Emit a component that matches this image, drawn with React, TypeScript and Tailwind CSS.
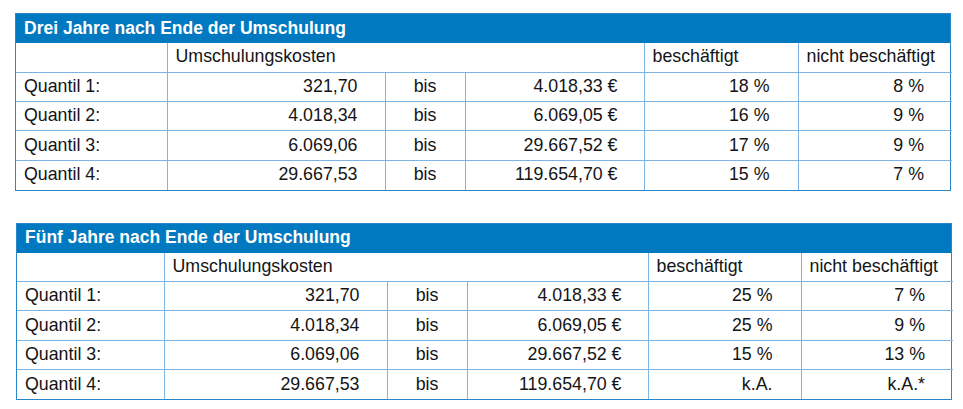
const tables = [
  {
    title: "Drei Jahre nach Ende der Umschulung",
    cols: [151, 218, 80, 179, 154, 154],
    rows: [
      ["Quantil 1:", "321,70", "4.018,33 €", "18 %", "8 %"],
      ["Quantil 2:", "4.018,34", "6.069,05 €", "16 %", "9 %"],
      ["Quantil 3:", "6.069,06", "29.667,52 €", "17 %", "9 %"],
      ["Quantil 4:", "29.667,53", "119.654,70 €", "15 %", "7 %"],
    ],
    className: "ml-[15px]",
  },
  {
    title: "Fünf Jahre nach Ende der Umschulung",
    cols: [147, 223, 80, 181, 153, 152],
    rows: [
      ["Quantil 1:", "321,70", "4.018,33 €", "25 %", "7 %"],
      ["Quantil 2:", "4.018,34", "6.069,05 €", "25 %", "9 %"],
      ["Quantil 3:", "6.069,06", "29.667,52 €", "15 %", "13 %"],
      ["Quantil 4:", "29.667,53", "119.654,70 €", "k.A.", "k.A.*"],
    ],
    className: "ml-[16px] mt-[32px]",
  },
];

const cell = "h-[29.4px] border-l border-t border-[#7db4e3] first:border-l-0 p-0 align-middle";

function CostTable({ title, cols, rows, className }: (typeof tables)[number]) {
  return (
    <div className={`w-[936px] border-[1.5px] border-[#2a85c9] ${className}`}>
      <div className="flex h-[29px] items-center bg-[#0079c1] pl-[8px] text-[17.5px] font-bold text-white">
        {title}
      </div>
      <table className="w-full table-fixed border-collapse">
        <colgroup>
          {cols.map((w, i) => (
            <col key={i} style={{ width: w }} />
          ))}
        </colgroup>
        <tbody>
          <tr>
            <td className="h-[29px] p-0" />
            <td colSpan={3} className="h-[29px] border-l border-[#7db4e3] pl-[8px]">
              Umschulungskosten
            </td>
            <td className="h-[29px] border-l border-[#7db4e3] pl-[8px]">beschäftigt</td>
            <td className="h-[29px] border-l border-[#7db4e3] pl-[8px]">nicht beschäftigt</td>
          </tr>
          {rows.map(([label, from, to, emp, notEmp]) => (
            <tr key={label}>
              <td className={`${cell} pl-[8px]`}>{label}</td>
              <td className={`${cell} pr-[27px] text-right`}>{from}</td>
              <td className={`${cell} text-center`}>bis</td>
              <td className={`${cell} pr-[26px] text-right`}>{to}</td>
              <td className={`${cell} pr-[28px] text-right`}>{emp}</td>
              <td className={`${cell} pr-[28px] text-right`}>{notEmp}</td>
            </tr>
          ))}
        </tbody>
      </table>
    </div>
  );
}

export default function App() {
  return (
    <div className="min-h-[409px] w-[963px] bg-white pt-[13px] font-['Liberation_Sans',Arial,sans-serif] text-[17.8px] leading-none text-[#141414]">
      {tables.map((t) => (
        <CostTable key={t.title} {...t} />
      ))}
    </div>
  );
}
